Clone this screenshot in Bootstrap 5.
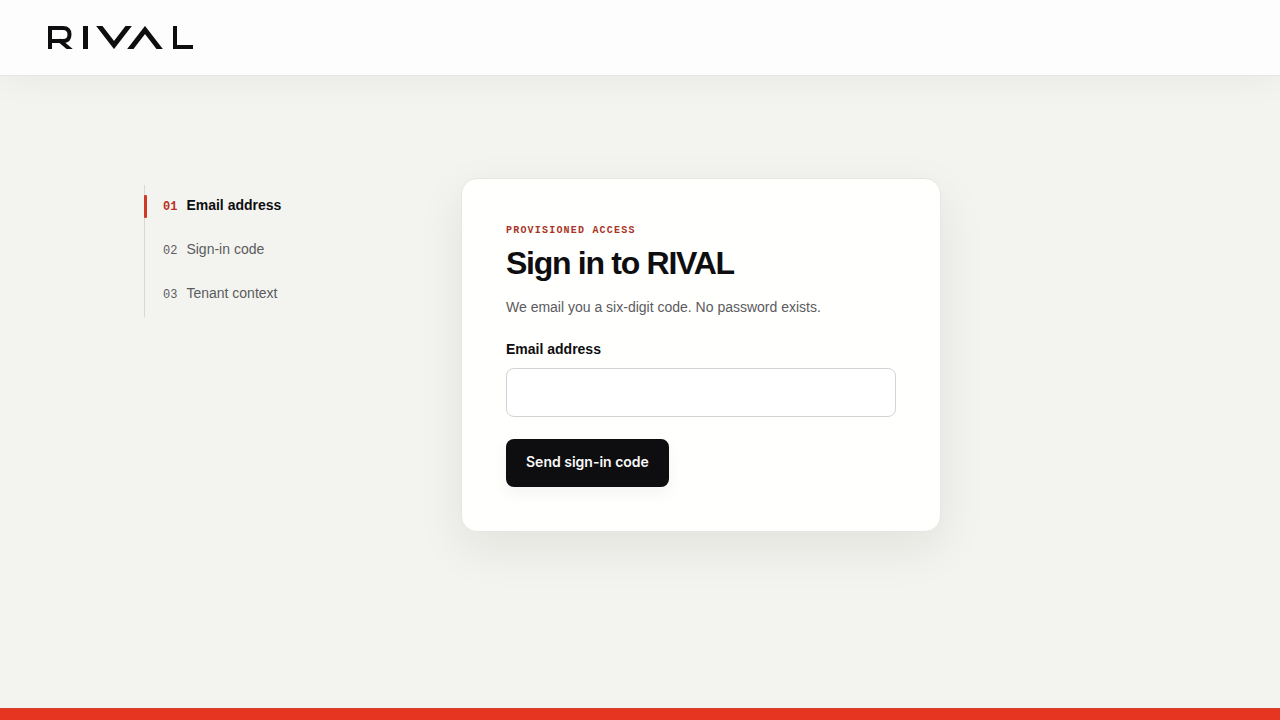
<!DOCTYPE html>
<html lang="en">
<head>
<meta charset="utf-8">
<meta name="viewport" content="width=device-width, initial-scale=1">
<title>Sign in to RIVAL</title>
<link href="https://cdn.jsdelivr.net/npm/bootstrap@5.3.0/dist/css/bootstrap.min.css" rel="stylesheet">
<style>
  :root { --ink: #0e0e10; --muted: #5b5b60; --accent: #cf3a28; --paper: #f3f4ef; --mono: "Liberation Mono", monospace; }
  body { font-family: "Liberation Sans", Arial, sans-serif; font-size: 14px; line-height: 20px; color: var(--ink); background: var(--paper); }
  .topbar { padding: 26px 48px; background: #fdfdfd; border-bottom: 1px solid #e6e7e2; box-shadow: 0 8px 32px rgba(20, 24, 10, .04); }
  .brand-logo { width: 145px; }
  .signin-layout { display: grid; grid-template-columns: 205px minmax(0, 480px); column-gap: 112px; width: 100%; max-width: 992px; margin: 0 auto; padding-top: 102px; }
  .steps { margin-top: 7px; border-left: 1px solid #d8d9d5; align-self: start; }
  .step-item { position: relative; padding: 10px 0 10px 18px; gap: 9px; color: var(--muted); }
  .step-number { font: 12px/24px var(--mono); }
  .step-item.current { color: var(--ink); font-weight: 600; }
  .step-item.current .step-number { color: #b8321f; font-weight: 700; }
  .step-item.current::before { content: ""; position: absolute; left: -1px; top: 10px; bottom: 11px; width: 3px; border-radius: 1px; background: var(--accent); }
  .signin-card { padding: 44px; border: 1px solid #e6e7e3; border-radius: 16px; background: #fffffd; box-shadow: 0 16px 48px rgba(20, 24, 10, .08); }
  .eyebrow { font: 700 10px/16px var(--mono); letter-spacing: .12em; color: #a93426; }
  .signin-title { margin: 6px 0 16px; font-size: 32px; line-height: 36px; font-weight: 700; letter-spacing: -.04em; }
  .lede { margin-bottom: 22px; color: var(--muted); }
  .signin-card .form-label { margin-bottom: 9px; font-weight: 600; }
  .signin-card .form-control { height: 49px; border-color: #d3d3d6; border-radius: 8px; background: #fff; }
  .send-button { height: 48px; margin-top: 22px; padding: 0 19px 2px; font-family: Inter, sans-serif; font-size: 14px; line-height: 20px; font-weight: 600; border-radius: 8px; color: #fafafa; background: var(--ink); box-shadow: 0 6px 16px rgba(14, 14, 16, .05); }
  .send-button:hover { color: #fff; background: #29292d; }
  .footer-band { height: 12px; background: #e63622; border-top: 1px solid #cf432f; }
</style>
</head>
<body class="d-flex flex-column min-vh-100">
<header class="topbar">
  <a href="#" class="d-block brand-logo" aria-label="RIVAL">
    <svg class="d-block" width="145" height="23" viewBox="0 0 145 23" fill="none" stroke="#0e0e10" stroke-width="4" aria-hidden="true">
      <path d="M2 23V2H15Q21.500 2 21.500 8.500Q21.500 15 15 15H4M11 14L24 25"/>
      <path d="M37.500 0V23" stroke-width="5"/>
      <path d="M49 -3L66 19L83 -3" stroke-width="5"/>
      <path d="M80 26L97 4L114 26" stroke-width="5"/>
      <path d="M127 0V21H145"/>
    </svg>
  </a>
</header>
<main class="flex-grow-1 px-3">
  <div class="signin-layout">
    <ol class="steps list-unstyled mb-0">
      <li class="step-item d-flex current" aria-current="step"><span class="step-number">01</span><span>Email address</span></li>
      <li class="step-item d-flex"><span class="step-number">02</span><span>Sign-in code</span></li>
      <li class="step-item d-flex"><span class="step-number">03</span><span>Tenant context</span></li>
    </ol>
    <section class="signin-card">
      <p class="eyebrow text-uppercase mb-0">Provisioned access</p>
      <h1 class="signin-title">Sign in to RIVAL</h1>
      <p class="lede">We email you a six-digit code. No password exists.</p>
      <form>
        <label class="form-label d-block" for="email">Email address</label>
        <input class="form-control" type="email" id="email" autocomplete="email">
        <button class="btn send-button" type="submit">Send sign-in code</button>
      </form>
    </section>
  </div>
</main>
<footer class="footer-band"></footer>
<script src="https://cdn.jsdelivr.net/npm/bootstrap@5.3.0/dist/js/bootstrap.bundle.min.js"></script>
</body>
</html>
